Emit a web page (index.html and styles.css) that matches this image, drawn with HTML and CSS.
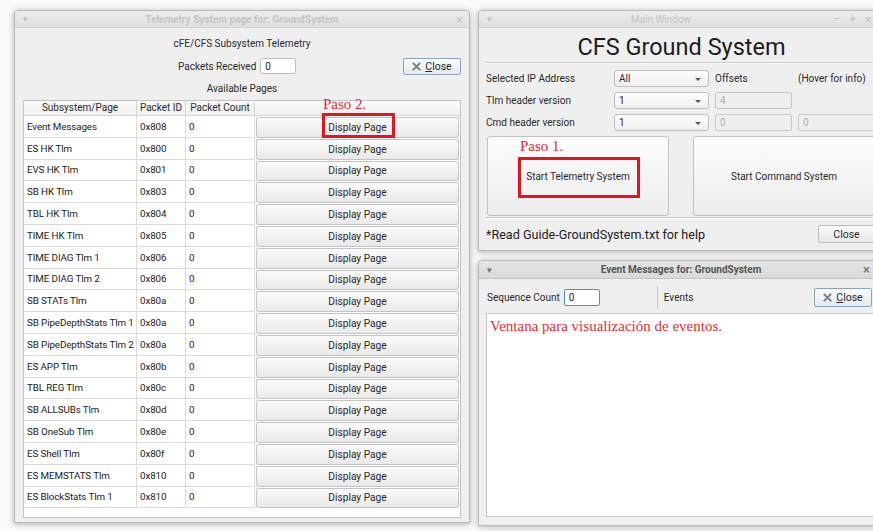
FILE: index.html
```html
<!DOCTYPE html>
<html lang="en">
<head>
<meta charset="utf-8">
<title>CFS Ground System</title>
<link rel="stylesheet" href="styles.css">
</head>
<body>
<div class="desk">

  <!-- Telemetry pages window -->
  <section class="win win-tlm">
    <header class="titlebar">
      <span class="tb-menu">&#9662;</span>
      <span class="tb-title">Telemetry System page for: GroundSystem</span>
      <span class="tb-btns"><span class="tb-x">&times;</span></span>
    </header>
    <div class="tlm-body">
      <div class="caption cap-top">cFE/CFS Subsystem Telemetry</div>
      <div class="pkt-row">
        <span class="pkt-label">Packets Received</span>
        <span class="field pkt-field">0</span>
        <button class="btn btn-close tlm-close">
          <svg class="x-ico" viewBox="0 0 10 10" width="9" height="9"><path d="M1.5 1.5 L8.5 8.5 M8.5 1.5 L1.5 8.5" stroke="#7b7b7b" stroke-width="2.2" stroke-linecap="round"/></svg>
          <span><u>C</u>lose</span>
        </button>
      </div>
      <div class="caption cap-pages">Available Pages</div>
      <div class="table">
        <div class="tr thead">
          <div class="th">Subsystem/Page</div>
          <div class="th">Packet ID</div>
          <div class="th">Packet Count</div>
          <div class="th"></div>
        </div>
        <div class="tr"><div class="td">Event Messages</div><div class="td">0x808</div><div class="td">0</div><div class="td tb"><button class="btn btn-page">Display Page</button></div></div>
        <div class="tr"><div class="td">ES HK Tlm</div><div class="td">0x800</div><div class="td">0</div><div class="td tb"><button class="btn btn-page">Display Page</button></div></div>
        <div class="tr"><div class="td">EVS HK Tlm</div><div class="td">0x801</div><div class="td">0</div><div class="td tb"><button class="btn btn-page">Display Page</button></div></div>
        <div class="tr"><div class="td">SB HK Tlm</div><div class="td">0x803</div><div class="td">0</div><div class="td tb"><button class="btn btn-page">Display Page</button></div></div>
        <div class="tr"><div class="td">TBL HK Tlm</div><div class="td">0x804</div><div class="td">0</div><div class="td tb"><button class="btn btn-page">Display Page</button></div></div>
        <div class="tr"><div class="td">TIME HK Tlm</div><div class="td">0x805</div><div class="td">0</div><div class="td tb"><button class="btn btn-page">Display Page</button></div></div>
        <div class="tr"><div class="td">TIME DIAG Tlm 1</div><div class="td">0x806</div><div class="td">0</div><div class="td tb"><button class="btn btn-page">Display Page</button></div></div>
        <div class="tr"><div class="td">TIME DIAG Tlm 2</div><div class="td">0x806</div><div class="td">0</div><div class="td tb"><button class="btn btn-page">Display Page</button></div></div>
        <div class="tr"><div class="td">SB STATs Tlm</div><div class="td">0x80a</div><div class="td">0</div><div class="td tb"><button class="btn btn-page">Display Page</button></div></div>
        <div class="tr"><div class="td">SB PipeDepthStats Tlm 1</div><div class="td">0x80a</div><div class="td">0</div><div class="td tb"><button class="btn btn-page">Display Page</button></div></div>
        <div class="tr"><div class="td">SB PipeDepthStats Tlm 2</div><div class="td">0x80a</div><div class="td">0</div><div class="td tb"><button class="btn btn-page">Display Page</button></div></div>
        <div class="tr"><div class="td">ES APP Tlm</div><div class="td">0x80b</div><div class="td">0</div><div class="td tb"><button class="btn btn-page">Display Page</button></div></div>
        <div class="tr"><div class="td">TBL REG Tlm</div><div class="td">0x80c</div><div class="td">0</div><div class="td tb"><button class="btn btn-page">Display Page</button></div></div>
        <div class="tr"><div class="td">SB ALLSUBs Tlm</div><div class="td">0x80d</div><div class="td">0</div><div class="td tb"><button class="btn btn-page">Display Page</button></div></div>
        <div class="tr"><div class="td">SB OneSub Tlm</div><div class="td">0x80e</div><div class="td">0</div><div class="td tb"><button class="btn btn-page">Display Page</button></div></div>
        <div class="tr"><div class="td">ES Shell Tlm</div><div class="td">0x80f</div><div class="td">0</div><div class="td tb"><button class="btn btn-page">Display Page</button></div></div>
        <div class="tr"><div class="td">ES MEMSTATS Tlm</div><div class="td">0x810</div><div class="td">0</div><div class="td tb"><button class="btn btn-page">Display Page</button></div></div>
        <div class="tr"><div class="td">ES BlockStats Tlm 1</div><div class="td">0x810</div><div class="td">0</div><div class="td tb"><button class="btn btn-page">Display Page</button></div></div>
      </div>
    </div>
  </section>

  <!-- Main window -->
  <section class="win win-main">
    <header class="titlebar">
      <span class="tb-menu">&#9662;</span>
      <span class="tb-title tb-title-main">Main Window</span>
      <span class="tb-btns tb-btns-main"><span>&minus;</span><span>+</span><span class="tb-x">&times;</span></span>
    </header>
    <div class="main-body">
      <h1 class="app-title">CFS Ground System</h1>
      <div class="sep"></div>
      <div class="cfg-grid">
        <span class="lbl">Selected IP Address</span>
        <span class="combo">All<i class="arrow"></i></span>
        <span class="lbl">Offsets</span>
        <span class="lbl hover-info">(Hover for info)</span>

        <span class="lbl">Tlm header version</span>
        <span class="combo">1<i class="arrow"></i></span>
        <span class="field disabled">4</span>
        <span></span>

        <span class="lbl">Cmd header version</span>
        <span class="combo">1<i class="arrow"></i></span>
        <span class="field disabled">0</span>
        <span class="field disabled">0</span>
      </div>
      <div class="big-btns">
        <button class="btn btn-big">Start Telemetry System</button>
        <button class="btn btn-big">Start Command System</button>
      </div>
      <div class="sep sep-low"></div>
      <div class="foot-row">
        <span class="help">*Read Guide-GroundSystem.txt for help</span>
        <button class="btn btn-plain">Close</button>
      </div>
    </div>
  </section>

  <!-- Event messages window -->
  <section class="win win-evt">
    <header class="titlebar active">
      <span class="tb-menu">&#9662;</span>
      <span class="tb-title">Event Messages for: GroundSystem</span>
      <span class="tb-btns tb-btns-evt"><span class="tb-x">&times;</span></span>
    </header>
    <div class="evt-body">
      <div class="evt-row">
        <span class="lbl">Sequence Count</span>
        <span class="field focus seq-field">0</span>
        <span class="vsep"></span>
        <span class="lbl">Events</span>
        <button class="btn btn-close evt-close">
          <svg class="x-ico" viewBox="0 0 10 10" width="9" height="9"><path d="M1.5 1.5 L8.5 8.5 M8.5 1.5 L1.5 8.5" stroke="#7b7b7b" stroke-width="2.2" stroke-linecap="round"/></svg>
          <span><u>C</u>lose</span>
        </button>
      </div>
      <div class="log">Ventana para visualización de eventos.</div>
    </div>
  </section>

  <!-- hand-drawn step notes laid over the windows -->
  <span class="note note-1">Paso 1.</span>
  <span class="mark mark-1"></span>
  <span class="note note-2">Paso 2.</span>
  <span class="mark mark-2"></span>
</div>
</body>
</html>
```

FILE: styles.css
```css
* { box-sizing: border-box; }

html, body {
  margin: 0;
  height: 100%;
}

body {
  background: #fafafa;
  font-family: Roboto, "Open Sans", sans-serif;
  font-size: 10px;
  color: #2a2a2a;
  overflow: hidden;
}

.desk {
  position: relative;
  width: 873px;
  height: 531px;
  overflow: hidden;
}

/* ---------- window frame ---------- */
.win {
  position: absolute;
  display: flex;
  flex-direction: column;
  background: #efefef;
  border: 1px solid #b8b8b8;
  border-radius: 4px 4px 0 0;
  box-shadow: 0 1px 6px rgba(0, 0, 0, 0.3);
}

.win-tlm  { left: 14px;  top: 10px;  width: 456px; height: 513px; }
.win-main { left: 478px; top: 10px;  width: 406px; height: 241px; }
.win-evt  { left: 478px; top: 260px; width: 406px; height: 266px; }

.titlebar {
  position: relative;
  flex: none;
  height: 17px;
  display: flex;
  align-items: center;
  justify-content: space-between;
  padding: 0 6px 0 8px;
  background: linear-gradient(#ebebeb, #e0e0e0);
  border-bottom: 1px solid #d4d4d4;
  border-radius: 3px 3px 0 0;
  color: #c4c4c4;
}

.titlebar.active {
  height: 18px;
  background: linear-gradient(#e4e4e4, #d9d9d9);
  border-bottom-color: #c4c4c4;
  color: #6a6a6a;
}

.tb-title {
  position: absolute;
  left: 0;
  right: 0;
  text-align: center;
  font-weight: bold;
  font-size: 10px;
}

.tb-title-main { right: 40px; font-weight: normal; }

.titlebar.active .tb-title { color: #555; }

.tb-menu { font-size: 9px; position: relative; }

.tb-btns {
  position: relative;
  display: flex;
  gap: 9px;
  font-size: 12px;
}

.tb-btns-main { margin-right: 5px; }
.tb-btns-evt { margin-right: 7px; }

.tb-x { font-size: 13px; }

/* ---------- common controls ---------- */
.btn {
  font: inherit;
  color: #2a2a2a;
  margin: 0;
  padding: 0;
  background: linear-gradient(#fbfbfb, #e9e9e9);
  border: 1px solid #bdbdbd;
  border-radius: 2px;
  cursor: default;
}

.btn-close {
  display: flex;
  align-items: center;
  justify-content: center;
  gap: 4px;
  border-color: #8aa4bf;
  background: linear-gradient(#f9fbfd, #e6eaee);
  font-size: 10.5px;
}

.field {
  display: flex;
  align-items: center;
  height: 16px;
  padding: 0 4px;
  background: #fff;
  border: 1px solid #bcbcbc;
  border-radius: 2px;
}

.field.disabled {
  background: #efefef;
  border-color: #c9c9c9;
  color: #b0b0b0;
  height: 17px;
}

.field.focus { border-color: #4d8fd0; }

.combo {
  position: relative;
  display: flex;
  align-items: center;
  height: 17px;
  padding: 0 4px;
  background: linear-gradient(#fdfdfd, #efefef);
  border: 1px solid #bdbdbd;
  border-radius: 3px;
}

.arrow {
  position: absolute;
  right: 7px;
  top: 7px;
  border-left: 3px solid transparent;
  border-right: 3px solid transparent;
  border-top: 3px solid #555;
}

.lbl { white-space: nowrap; }

.sep {
  height: 2px;
  border-top: 1px solid #cdcdcd;
  border-bottom: 1px solid #f9f9f9;
}

/* ---------- telemetry window ---------- */
.tlm-body {
  flex: 1;
  display: flex;
  flex-direction: column;
  padding: 0 8px;
}

.caption {
  text-align: center;
  line-height: 14px;
}

.cap-top { margin-top: 9px; }

.pkt-row {
  display: flex;
  align-items: center;
  height: 18px;
  margin-top: 6px;
}

.pkt-label { margin-left: 155px; }

.pkt-field { width: 36px; margin-left: 4px; }

.tlm-close {
  width: 58px;
  height: 17px;
  margin-left: auto;
}

.cap-pages { margin-top: 7px; }

.table {
  margin-top: 4px;
  height: 418px;
  background: #fff;
  border: 1px solid #c3c3c3;
}

.tr {
  display: grid;
  grid-template-columns: 113px 49px 69px 1fr;
  height: 21.8px;
}

.thead {
  height: 15px;
  background: linear-gradient(#fafafa, #f0f0f0);
  border-bottom: 1px solid #d6d6d6;
}

.th {
  text-align: center;
  line-height: 14px;
  border-right: 1px solid #d6d6d6;
}

.th:last-child { border-right: 0; }

.td {
  display: flex;
  align-items: center;
  padding-left: 3px;
  white-space: nowrap;
  overflow: hidden;
  font-size: 9.8px;
  letter-spacing: -0.1px;
  color: #222;
  border-right: 1px solid #dcdcdc;
  border-bottom: 1px solid #dcdcdc;
}

.td.tb {
  padding: 1px 1px 0 1px;
  border-right: 0;
  border-bottom: 0;
  letter-spacing: 0;
}

.btn-page {
  width: 100%;
  height: 100%;
  border-color: #c4c4c4;
  font-size: 10.2px;
}

/* ---------- main window ---------- */
.main-body {
  flex: 1;
  display: flex;
  flex-direction: column;
  padding: 0 8px 0 7px;
}

.app-title {
  margin: 5px 0 0;
  font-weight: normal;
  font-size: 23.5px;
  line-height: 28px;
  color: #1c1c1c;
  text-align: center;
  padding-left: 2px;
}

.main-body > .sep { margin-top: 1px; }

.cfg-grid {
  display: grid;
  grid-template-columns: 122px 95px 77px 77px;
  grid-auto-rows: 17px;
  column-gap: 6px;
  row-gap: 5px;
  margin-top: 6px;
  align-items: center;
}

.big-btns {
  display: grid;
  grid-template-columns: 182px 182px;
  column-gap: 24px;
  margin-top: 5px;
  padding-left: 1px;
}

.btn-big {
  height: 80px;
  background: linear-gradient(#fcfcfc, #ededed);
  border-color: #c2c2c2;
  border-radius: 3px;
}

.sep-low { margin-top: 4px; }

.foot-row {
  display: flex;
  align-items: center;
  justify-content: space-between;
  margin-top: 6px;
  height: 18px;
}

.help {
  font-size: 12.6px;
  color: #222;
}

.btn-plain {
  width: 57px;
  height: 18px;
  font-size: 10.5px;
}

/* ---------- event window ---------- */
.evt-body {
  flex: 1;
  display: flex;
  flex-direction: column;
  padding: 0 0 8px 7px;
}

.evt-row {
  display: flex;
  align-items: center;
  height: 23px;
  margin-top: 7px;
  padding: 0 11px 0 1px;
}

.seq-field { width: 36px; margin-left: 4px; height: 17px; }

.vsep {
  width: 1px;
  height: 23px;
  background: #c6c6c6;
  margin: 0 6px 0 57px;
}

.evt-close {
  width: 58px;
  height: 19px;
  margin-left: auto;
}

.log {
  flex: 1;
  margin-top: 4px;
  background: #fff;
  border: 1px solid #c4c4c4;
  padding: 4px 3px;
  font-family: "Liberation Serif", serif;
  font-size: 15px;
  color: #ee2a30;
}

/* ---------- step notes ---------- */
.note {
  position: absolute;
  font-family: "Liberation Serif", serif;
  font-size: 15px;
  line-height: 16px;
  color: #ee2a30;
}

.note-1 { left: 520px; top: 138px; }
.note-2 { left: 323px; top: 96px; }

.mark {
  position: absolute;
  border: 3px solid #e8131c;
}

.mark-1 { left: 518px; top: 157px; width: 122px; height: 41px; }
.mark-2 { left: 322px; top: 113px; width: 73px; height: 25px; }
```
